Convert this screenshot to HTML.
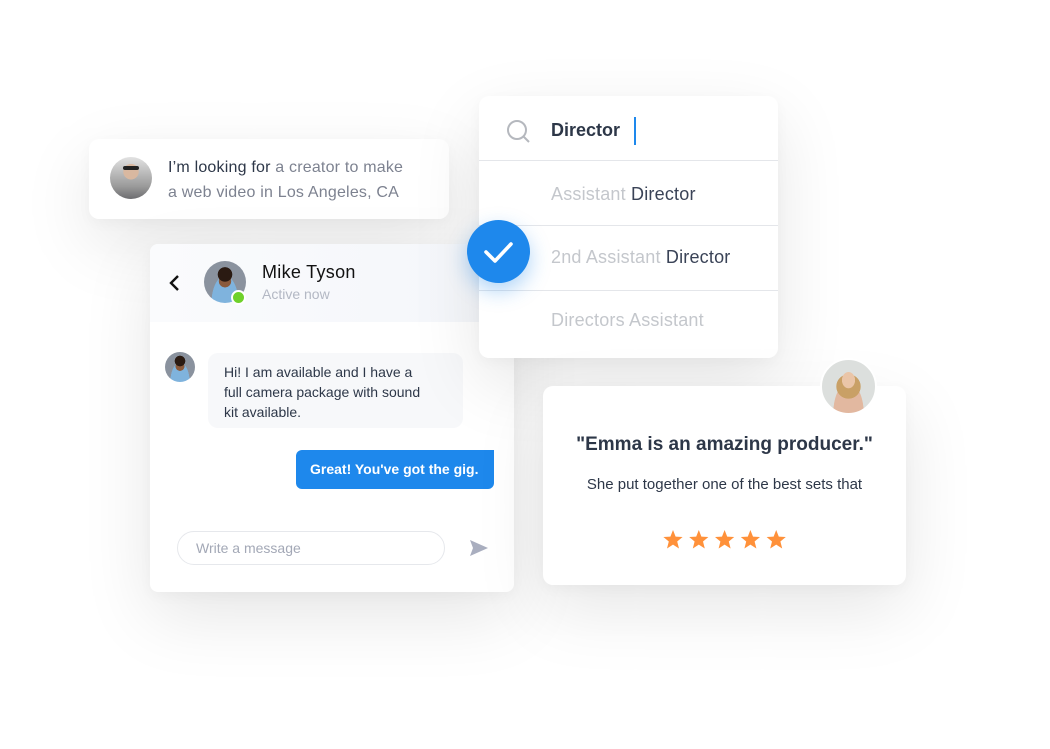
<!DOCTYPE html>
<html><head><meta charset="utf-8"><style>
*{margin:0;padding:0;box-sizing:border-box}
body{width:1050px;height:749px;background:#fff;position:relative;overflow:hidden;font-family:"Liberation Sans",sans-serif;}
.card{position:absolute;background:#fff;border-radius:10px;box-shadow:0 24px 70px rgba(0,0,0,0.10),0 4px 14px rgba(0,0,0,0.03);}
.av{position:absolute;border-radius:50%;overflow:hidden}
.t{position:absolute;white-space:nowrap}
</style></head><body>

<!-- looking for card -->
<div class="card" style="left:89px;top:139px;width:360px;height:80px;"></div>
<div class="av" style="left:110px;top:157px;width:42px;height:42px;background:radial-gradient(circle at 50% 35%,#d9b8a0 0 22%,transparent 23%),linear-gradient(#e2e2e2,#9a9a9a 70%,#6d6d70);"></div>
<div class="t" style="left:110px;top:166px;width:42px;height:4px;"><div style="margin-left:13px;width:16px;height:4px;background:#222;border-radius:2px"></div></div>
<div class="t" style="left:168px;top:155px;font-size:16px;line-height:25px;color:#2d3748;letter-spacing:0.2px">I’m looking for <span style="color:#7d8290">a creator to make</span><br><span style="color:#7d8290">a web video in Los Angeles, CA</span></div>

<!-- chat card -->
<div class="card" style="left:150px;top:244px;width:364px;height:348px;overflow:hidden;border-radius:8px">
  <div style="height:78px;background:linear-gradient(90deg,#fafbfd,#f4f6fa)"></div>
</div>
<svg class="t" style="left:168px;top:273px" width="14" height="20" viewBox="0 0 14 20"><path d="M10 3 L3 10 L10 17" fill="none" stroke="#111" stroke-width="2.4"/></svg>
<div class="av" style="left:204px;top:261px;width:42px;height:42px;background:radial-gradient(circle at 50% 32%,#2a1a12 0 20%,transparent 21%),radial-gradient(circle at 50% 48%,#8a5a3c 0 20%,transparent 21%),radial-gradient(ellipse at 50% 100%,#7fb3dd 0 45%,transparent 46%),#8a929e;"></div>
<div class="av" style="left:231px;top:290px;width:15px;height:15px;background:#6fd12a;border:2px solid #fff"></div>
<div class="t" style="left:262px;top:262px;font-size:18px;color:#111;letter-spacing:0.3px">Mike Tyson</div>
<div class="t" style="left:262px;top:286px;font-size:14px;color:#b3b8c4">Active now</div>

<div class="av" style="left:165px;top:352px;width:30px;height:30px;background:radial-gradient(circle at 50% 30%,#2a1a12 0 20%,transparent 21%),radial-gradient(circle at 50% 48%,#8a5a3c 0 20%,transparent 21%),radial-gradient(ellipse at 50% 100%,#7fb3dd 0 45%,transparent 46%),#8a929e;"></div>
<div class="t" style="left:208px;top:353px;width:255px;height:75px;background:#f7f8fa;border-radius:10px"></div>
<div class="t" style="left:224px;top:362px;font-size:14px;line-height:20px;color:#2d3748">Hi! I am available and I have a<br>full camera package with sound<br>kit available.</div>
<div class="t" style="left:296px;top:450px;width:198px;height:39px;background:#1e88ec;border-radius:6px 0 6px 6px;color:#fff;font-size:14px;font-weight:bold;line-height:39px;padding-left:14px">Great! You've got the gig.</div>
<div class="t" style="left:177px;top:531px;width:268px;height:34px;border:1px solid #e6e8ec;border-radius:17px;font-size:14px;color:#a3a8b6;line-height:32px;padding-left:18px">Write a message</div>
<svg class="t" style="left:469px;top:539px" width="20" height="18" viewBox="0 0 20 18"><path d="M1 1 L19 9 L1 17 L4 9 Z" fill="#a9aebf"/></svg>

<!-- search card -->
<div class="card" style="left:479px;top:96px;width:299px;height:262px;"></div>
<div class="t" style="left:479px;top:160px;width:299px;height:1px;background:#e4e6ea"></div>
<div class="t" style="left:479px;top:225px;width:299px;height:1px;background:#e4e6ea"></div>
<div class="t" style="left:479px;top:290px;width:299px;height:1px;background:#e4e6ea"></div>
<svg class="t" style="left:506px;top:119px" width="26" height="26" viewBox="0 0 26 26"><circle cx="11" cy="11" r="9" fill="none" stroke="#b5b8be" stroke-width="2"/><path d="M17.5 17.5 L23 23" stroke="#b5b8be" stroke-width="2"/></svg>
<div class="t" style="left:551px;top:120px;font-size:18px;font-weight:bold;color:#2d3748">Director</div>
<div class="t" style="left:634px;top:117px;width:2px;height:28px;background:#1e88ec"></div>
<div class="t" style="left:551px;top:184px;font-size:18px;color:#c4c7cc;letter-spacing:0.2px">Assistant <span style="color:#3a4357">Director</span></div>
<div class="t" style="left:551px;top:247px;font-size:18px;color:#c4c7cc;letter-spacing:0.2px">2nd Assistant <span style="color:#3a4357">Director</span></div>
<div class="t" style="left:551px;top:310px;font-size:18px;color:#c4c7cc;letter-spacing:0.2px">Directors Assistant</div>

<!-- check -->
<div class="av" style="left:467px;top:220px;width:63px;height:63px;background:#1e88ec;box-shadow:0 8px 20px rgba(30,136,236,0.35)"></div>
<svg class="t" style="left:467px;top:220px" width="63" height="63" viewBox="0 0 63 63"><path d="M19 32 L28 41 L44 24" fill="none" stroke="#fff" stroke-width="3.6" stroke-linecap="round" stroke-linejoin="round"/></svg>

<!-- review card -->
<div class="card" style="left:543px;top:386px;width:363px;height:199px;"></div>
<div class="av" style="left:820px;top:358px;width:57px;height:57px;border:2px solid #fff;background:radial-gradient(ellipse at 50% 38%,#eac5a8 0 17%,transparent 18%),radial-gradient(ellipse at 50% 50%,#c9a066 0 32%,transparent 33%),radial-gradient(ellipse at 50% 100%,#e2b8a0 0 40%,transparent 41%),#dcdfdd;"></div>
<div class="t" style="left:543px;top:434px;width:363px;text-align:center;font-size:19px;font-weight:bold;color:#2d3748">"Emma is an amazing producer."</div>
<div class="t" style="left:543px;top:476px;width:363px;text-align:center;font-size:15px;color:#2d3748">She put together one of the best sets that</div>
<svg class="t" style="left:662px;top:529px" width="126" height="22" viewBox="0 0 126 22">
<defs><path id="s" d="M11 1 L13.6 7.6 L20.6 8 L15.2 12.5 L17 19.5 L11 15.6 L5 19.5 L6.8 12.5 L1.4 8 L8.4 7.6 Z" fill="#ff913a"/></defs>
<use href="#s" x="0"/><use href="#s" x="25.8"/><use href="#s" x="51.6"/><use href="#s" x="77.4"/><use href="#s" x="103.2"/>
</svg>

</body></html>
